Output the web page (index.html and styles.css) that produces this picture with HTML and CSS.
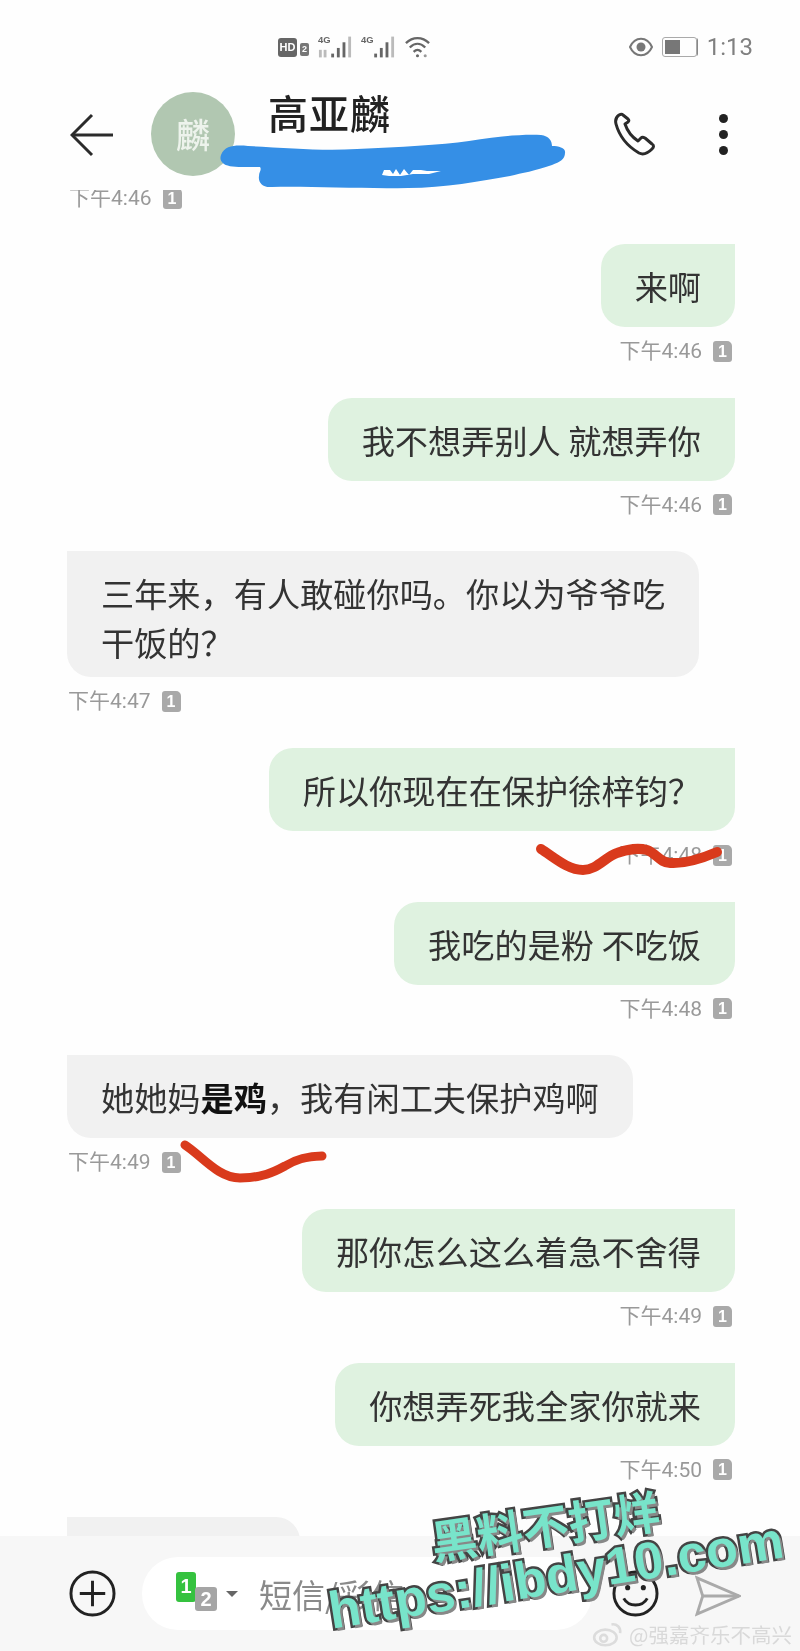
FILE: index.html
```html
<!DOCTYPE html>
<html lang="zh-CN">

<head>
    <meta charset="UTF-8">
    <meta name="viewport" content="width=device-width, initial-scale=1.0">
    <title>高亚麟</title>
    <link rel="stylesheet" href="styles.css">
</head>

<body>
    <div class="phone">
        <header class="top">
            <div class="status">
                <div class="status-left">
                    <span class="hd">HD</span>
                    <span class="hd-sim">2</span>
                    <svg class="signal" viewBox="0 0 36 26">
                        <text x="0" y="9" class="signal-text">4G</text>
                        <rect x="1" y="16" width="3" height="8" class="faint" />
                        <rect x="6" y="16" width="3" height="8" class="faint" />
                        <rect x="14" y="20" width="3" height="4" />
                        <rect x="20" y="14" width="3" height="10" />
                        <rect x="26" y="8" width="3" height="16" />
                        <rect x="32" y="2" width="3" height="22" class="faint" />
                    </svg>
                    <svg class="signal" viewBox="0 0 36 26">
                        <text x="0" y="9" class="signal-text">4G</text>
                        <rect x="14" y="20" width="3" height="4" />
                        <rect x="20" y="14" width="3" height="10" />
                        <rect x="26" y="8" width="3" height="16" />
                        <rect x="32" y="2" width="3" height="22" class="faint" />
                    </svg>
                    <svg class="wifi" viewBox="0 0 28 24" fill="none" stroke="#666" stroke-width="2.4">
                        <path d="M2 8c7-7 17-7 24 0" />
                        <path d="M6 12.500c5-5 11-5 16 0" />
                        <path d="M10 17c2.500-2.500 5.500-2.500 8 0" />
                        <circle cx="14" cy="21" r="1.600" fill="#666" stroke="none" />
                        <circle cx="22" cy="21" r="1.600" fill="#999" stroke="none" />
                    </svg>
                </div>
                <div class="status-right">
                    <svg class="eye" viewBox="0 0 24 20">
                        <path d="M1 10c5-11 17-11 22 0-5 11-17 11-22 0z" fill="none" stroke="#777" stroke-width="2" />
                        <circle cx="12" cy="10" r="4.500" fill="#777" />
                    </svg>
                    <div class="battery"><div class="battery-level"></div></div>
                    <span class="clock">1:13</span>
                </div>
            </div>
            <div class="appbar">
                <svg class="back" viewBox="0 0 44 44" fill="none" stroke="#2b2b2b" stroke-width="3">
                    <path d="M22 2L2 22l20 20" />
                    <path d="M2 22h41" />
                </svg>
                <div class="avatar">麟</div>
                <div class="name">高亚麟</div>
                <svg class="call" viewBox="0 0 44 44" fill="none" stroke="#2b2b2b" stroke-width="3" stroke-linejoin="round">
                    <path d="M6 3C3 5 2 8 3 12c3 11 11 22 23 29 4 2 8 1 13-4 2-2 2-4 0-5l-7-6c-2-1-3-1-4 0l-3 3C19 25 14 18 12 12l3-2c1-1 1-2 0-3l-5-4C9 2 8 2 6 3z" />
                </svg>
                <div class="dots">
                    <span></span>
                    <span></span>
                    <span></span>
                </div>
            </div>
        </header>

        <main class="list">
            <div class="meta meta-first"><span>下午4:46</span><i class="sim">1</i></div>

            <div class="msg sent">
                <div class="bubble">来啊</div>
                <div class="meta"><span>下午4:46</span><i class="sim">1</i></div>
            </div>
            <div class="msg sent">
                <div class="bubble">我不想弄别人 就想弄你</div>
                <div class="meta"><span>下午4:46</span><i class="sim">1</i></div>
            </div>
            <div class="msg got">
                <div class="bubble bubble-two">三年来，有人敢碰你吗。你以为爷爷吃<br>干饭的？</div>
                <div class="meta"><span>下午4:47</span><i class="sim">1</i></div>
            </div>
            <div class="msg sent">
                <div class="bubble">所以你现在在保护徐梓钧？</div>
                <div class="meta"><span>下午4:48</span><i class="sim">1</i></div>
            </div>
            <div class="msg sent">
                <div class="bubble">我吃的是粉 不吃饭</div>
                <div class="meta"><span>下午4:48</span><i class="sim">1</i></div>
            </div>
            <div class="msg got">
                <div class="bubble">她她妈<b>是鸡</b>，我有闲工夫保护鸡啊</div>
                <div class="meta"><span>下午4:49</span><i class="sim">1</i></div>
            </div>
            <div class="msg sent">
                <div class="bubble">那你怎么这么着急不舍得</div>
                <div class="meta"><span>下午4:49</span><i class="sim">1</i></div>
            </div>
            <div class="msg sent">
                <div class="bubble">你想弄死我全家你就来</div>
                <div class="meta"><span>下午4:50</span><i class="sim">1</i></div>
            </div>
            <div class="msg got">
                <div class="bubble bubble-cut"></div>
            </div>
        </main>

        <footer class="bottom">
            <svg class="plus" viewBox="0 0 48 48" fill="none" stroke="#222" stroke-width="3">
                <circle cx="24" cy="24" r="22" />
                <path d="M24 11v26M11 24h26" />
            </svg>
            <div class="input">
                <div class="sims">
                    <span class="sim-one">1</span>
                    <span class="sim-two">2</span>
                </div>
                <span class="caret"></span>
                <span class="placeholder">短信/彩信</span>
            </div>
            <svg class="smile" viewBox="0 0 48 48" fill="none" stroke="#222" stroke-width="3">
                <circle cx="24" cy="24" r="22" />
                <circle cx="16" cy="18" r="2.600" fill="#222" stroke="none" />
                <circle cx="32" cy="18" r="2.600" fill="#222" stroke="none" />
                <path d="M12 29c5 9 19 9 24 0" />
            </svg>
            <svg class="send" viewBox="0 0 48 44" fill="none" stroke="#aaa" stroke-width="3">
                <path d="M2 3l44 19L2 41l6-19z" />
                <path d="M8 22h38" />
            </svg>
        </footer>

        <!-- marker scribbles drawn over the shot -->
        <svg class="scribbles" viewBox="0 0 800 1651" fill="none">
            <path d="M221 155C225 145 236 145 248 146C290 148 320 151 357 149C400 147 440 145 469 141C495 137 520 134 541 135C549 136 552 141 552 146C559 146 566 148 565 153C565 159 560 162 552 165C535 171 522 173 510 176C480 181 445 188 408 188C360 189 310 186 272 187C262 188 258 182 259 176C259 172 262 170 260 167C245 167 230 168 224 164C220 161 220 158 221 155Z" fill="#358fe6" />
            <path d="M384 170h6l3 4 3-5 4 6 4-6 5 6 4-5h8l6 1h14l-12 3h-16l-12 2h-12l-7-1z" fill="#fff" />
            <path d="M541 849C555 858 568 870 583 870C597 870 605 857 617 853C628 849 640 848 647 850C656 853 660 863 670 863C685 864 703 858 717 852" stroke="#d93a1c" stroke-width="10" stroke-linecap="round" />
            <path d="M185 1145C202 1156 218 1178 240 1178C262 1178 274 1172 285 1166C295 1160 305 1156 322 1156" stroke="#d93a1c" stroke-width="9" stroke-linecap="round" />
        </svg>

        <div class="stamp stamp-cn">黑料不打烊</div>
        <div class="stamp stamp-url">https://ibdy10.com</div>
        <div class="weibo">
            <svg class="weibo-logo" viewBox="0 0 36 30" fill="none" stroke="#dcdcdc" stroke-width="3">
                <ellipse cx="15" cy="19" rx="13" ry="9" />
                <circle cx="13" cy="20" r="4" />
                <path d="M22 4c6-1 11 3 10 10" />
            </svg>
            <span>@强嘉齐乐不高兴</span>
        </div>
    </div>
</body>

</html>
```
FILE: styles.css
```css
* {
    box-sizing: border-box;
}

body {
    margin: 0;
    background-color: #ffffff;
    font-family: "Noto Sans CJK SC", "Liberation Sans", sans-serif;
    color: #333;
}

.phone {
    position: relative;
    display: flex;
    flex-direction: column;
    width: 800px;
    height: 1651px;
    overflow: hidden;
    background-color: #fefefe;
    filter: blur(0.7px);
}

/* status bar + title */
.top {
    flex: none;
    height: 190px;
    padding-top: 32px;
}

.status {
    display: flex;
    justify-content: space-between;
    align-items: center;
    height: 30px;
    padding: 0 47px 0 278px;
}

.status-left,
.status-right {
    display: flex;
    align-items: center;
}

.hd {
    width: 19px;
    height: 19px;
    background-color: #666;
    border-radius: 3px;
    color: #fff;
    font: bold 11px/19px "Liberation Sans", sans-serif;
    text-align: center;
}

.hd-sim {
    width: 9px;
    height: 13px;
    margin: 4px 9px 0 3px;
    background-color: #777;
    border-radius: 2px;
    color: #fff;
    font: bold 9px/13px "Liberation Sans", sans-serif;
    text-align: center;
}

.signal {
    width: 34px;
    height: 26px;
    margin-right: 9px;
    fill: #666;
}

.signal .faint {
    fill: #bbb;
}

.signal-text {
    font: bold 10px "Liberation Sans", sans-serif;
}

.wifi {
    width: 27px;
    height: 24px;
}

.eye {
    width: 24px;
    height: 20px;
    margin-right: 9px;
}

.battery {
    width: 35px;
    height: 20px;
    margin-right: 10px;
    padding: 2px;
    border: 1px solid #aaa;
    border-radius: 3px;
    box-shadow: 2px 0 0 -1px #888;
}

.battery-level {
    width: 15px;
    height: 100%;
    background-color: #777;
}

.clock {
    font: 24px/30px Roboto, sans-serif;
    color: #808080;
}

.appbar {
    position: relative;
    display: flex;
    align-items: flex-start;
    height: 128px;
    padding: 30px 0 0 70px;
}

.back {
    width: 44px;
    height: 44px;
    margin-top: 21px;
}

.avatar {
    width: 84px;
    height: 84px;
    margin-left: 37px;
    background-color: #b1c7b1;
    border-radius: 50%;
    color: #edf3ec;
    font-size: 34px;
    font-weight: 500;
    line-height: 84px;
    text-align: center;
}

.name {
    margin: 0 0 0 33px;
    color: #222;
    font-size: 40px;
    font-weight: 500;
    line-height: 44px;
    letter-spacing: 1px;
    transform: translateY(-2px);
}

.call {
    width: 44px;
    height: 44px;
    margin: 20px 0 0 222px;
}

.dots {
    display: flex;
    flex-direction: column;
    gap: 7px;
    margin: 22px 0 0 62px;
}

.dots span {
    width: 9px;
    height: 9px;
    background-color: #222;
    border-radius: 50%;
}

/* messages */
.list {
    flex: 1;
    overflow: hidden;
    padding: 0 65px 0 67px;
}

.msg {
    display: flex;
    flex-direction: column;
    margin-bottom: 33.7px;
}

.sent {
    align-items: flex-end;
}

.got {
    align-items: flex-start;
}

.bubble {
    padding: 17px 34px;
    font-size: 33.2px;
    line-height: 49px;
    color: #333;
}

.bubble-two {
    padding-bottom: 11px;
}

.bubble b {
    color: #111;
    font-weight: 700;
}

.sent .bubble {
    background-color: #dff2e0;
    border-radius: 24px 0 24px 24px;
}

.got .bubble {
    background-color: #f1f1f1;
    border-radius: 0 24px 24px 24px;
}

.bubble-cut {
    width: 233px;
    height: 83px;
}

.meta {
    display: flex;
    align-items: center;
    gap: 11px;
    height: 26px;
    margin-top: 11px;
    padding: 0 3px 0 1px;
    font: 21px/26px Roboto, "Noto Sans CJK SC", sans-serif;
    color: #999;
}

.meta-first {
    margin: -5px 0 33px;
    padding-left: 2px;
    height: 26px;
}

.sim {
    width: 19px;
    height: 21px;
    background-color: #a9a9a9;
    border-radius: 3px 5px 3px 3px;
    color: #fff;
    font: bold 16px/21px "Liberation Sans", sans-serif;
    text-align: center;
}

/* input bar */
.bottom {
    flex: none;
    display: flex;
    align-items: flex-start;
    height: 115px;
    padding: 21px 0 0 69px;
    background-color: #f7f7f7;
}

.plus {
    width: 47px;
    height: 47px;
    margin-top: 13px;
}

.input {
    display: flex;
    align-items: center;
    width: 450px;
    height: 73px;
    margin-left: 26px;
    padding-left: 34px;
    background-color: #ffffff;
    border-radius: 36px;
}

.sims {
    position: relative;
    width: 42px;
    height: 38px;
    margin-top: -5px;
}

.sim-one,
.sim-two {
    position: absolute;
    color: #fff;
    font: bold 20px/28px "Liberation Sans", sans-serif;
    text-align: center;
    border-radius: 3px;
}

.sim-one {
    left: 0;
    top: 0;
    width: 20px;
    height: 30px;
    background-color: #35c23f;
}

.sim-two {
    left: 19px;
    top: 15px;
    width: 22px;
    height: 24px;
    line-height: 24px;
    background-color: #a5a5a5;
}

.caret {
    width: 0;
    height: 0;
    margin: 0 21px 0 8px;
    border-top: 6px solid #666;
    border-left: 6px solid transparent;
    border-right: 6px solid transparent;
}

.placeholder {
    font-size: 33px;
    color: #8a8a8a;
    white-space: nowrap;
}

.smile {
    width: 47px;
    height: 47px;
    margin: 13px 0 0 20px;
}

.send {
    width: 46px;
    height: 42px;
    margin: 18px 0 0 36px;
}

/* things lying over the shot */
.scribbles {
    position: absolute;
    left: 0;
    top: 0;
    width: 800px;
    height: 1651px;
}

.stamp {
    position: absolute;
    color: #78e4ca;
    font-weight: 700;
    white-space: nowrap;
    -webkit-text-stroke: 5px #444;
    paint-order: stroke fill;
    text-shadow: 2px 3px 0 #888;
    transform-origin: left center;
}

.stamp-cn {
    left: 431px;
    top: 1510px;
    font-size: 46px;
    line-height: 60px;
    transform: rotate(-8deg);
}

.stamp-url {
    left: 329px;
    top: 1581px;
    font-family: "Liberation Sans", sans-serif;
    font-size: 52px;
    line-height: 60px;
    transform: rotate(-9deg);
}

.weibo {
    position: absolute;
    left: 592px;
    top: 1621px;
    display: flex;
    align-items: center;
    gap: 5px;
    font-size: 20.5px;
    line-height: 26px;
    color: #d9d9d9;
    white-space: nowrap;
}

.weibo-logo {
    width: 32px;
    height: 26px;
}
```
